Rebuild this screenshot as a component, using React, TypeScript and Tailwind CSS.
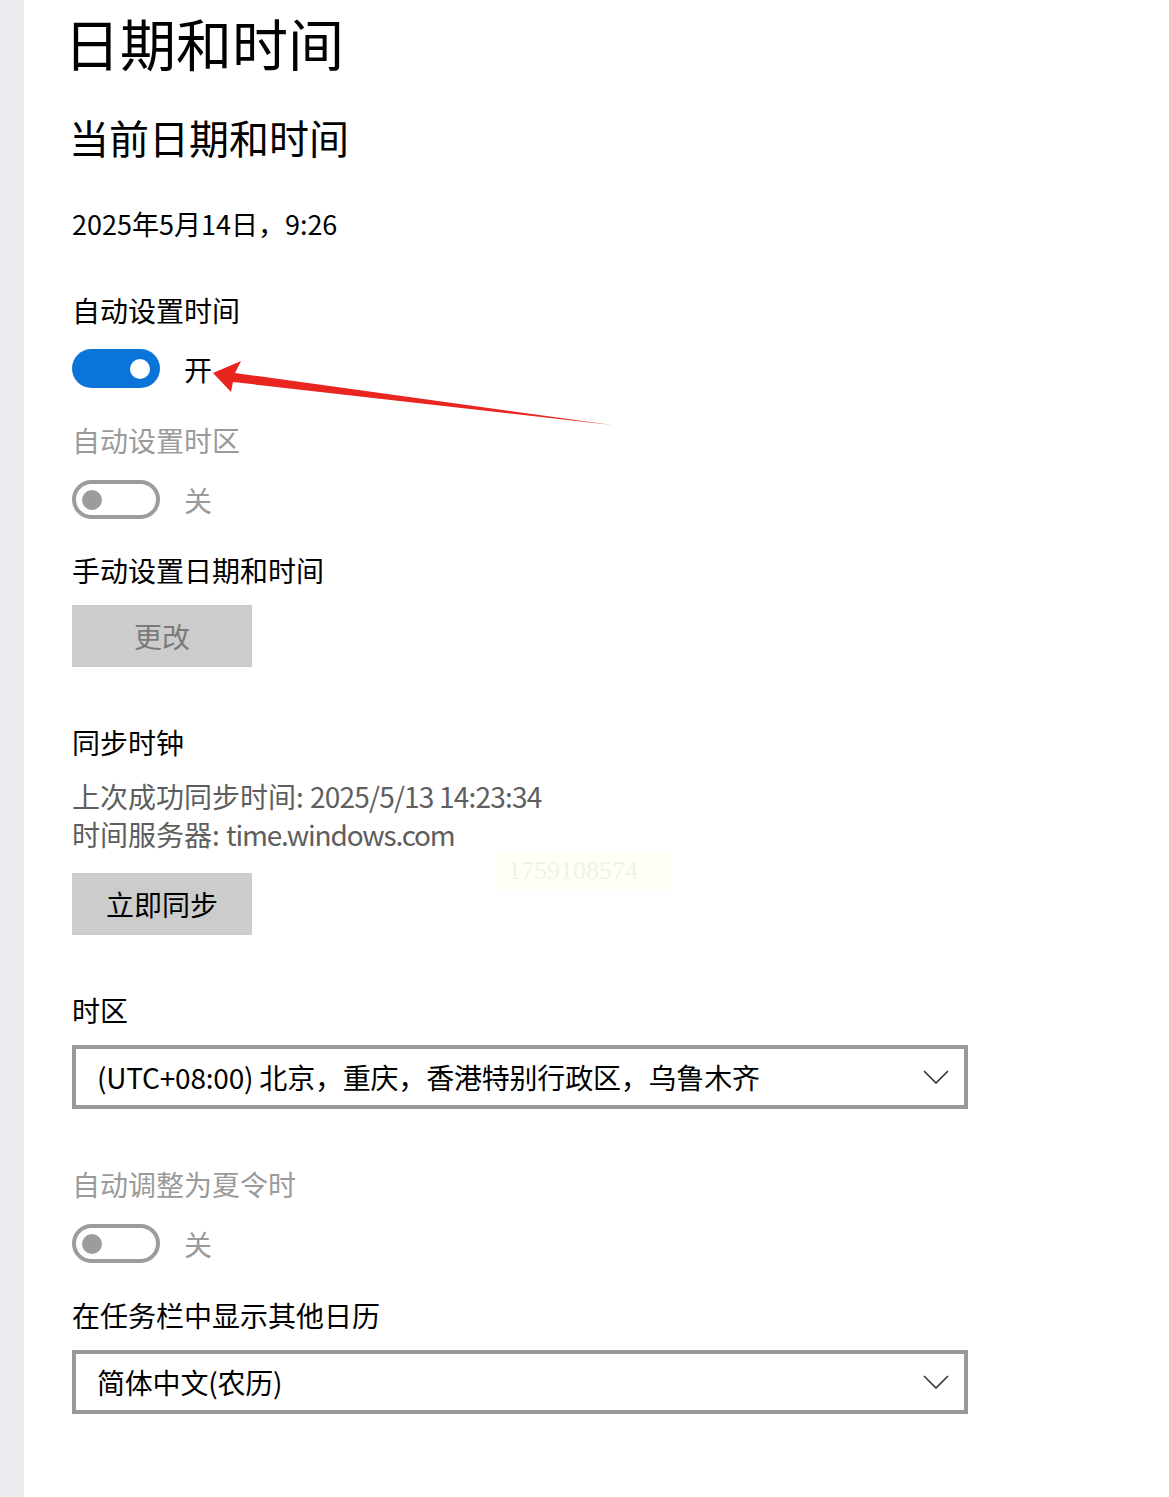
import React from "react";

const FONT = { fontFamily: '"Noto Sans CJK SC", "Noto Sans", sans-serif' };

const Toggle = ({ on, label }: { on: boolean; label: string }) => (
  <div className="flex items-center h-[39px]">
    {on ? (
      <div className="w-[88px] h-[39px] rounded-full bg-[#0a74d9] flex items-center justify-end pr-[10px]">
        <div className="w-[20px] h-[20px] rounded-full bg-white" />
      </div>
    ) : (
      <div className="w-[88px] h-[39px] rounded-full border-4 border-[#9c9c9c] flex items-center pl-[6px]">
        <div className="w-[20px] h-[20px] rounded-full bg-[#9c9c9c]" />
      </div>
    )}
    <span className={`ml-[24px] text-[28px] leading-[28px] ${on ? "text-black" : "text-[#9a9a9a]"}`}>{label}</span>
  </div>
);

const Select = ({ value }: { value: string }) => (
  <div className="w-[896px] h-[64px] border-4 border-[#999999] bg-white flex items-center justify-between pl-[21px] pr-[15px]">
    <span className="text-[28px] leading-[28px] text-black tracking-[-0.2px]">{value}</span>
    <svg width="26" height="14" viewBox="0 0 26 14" fill="none">
      <path d="M1 1 L13 13 L25 1" stroke="#333" strokeWidth="1.6" />
    </svg>
  </div>
);

export default function App() {
  return (
    <div className="relative flex w-[1169px] min-h-[1497px] bg-white" style={FONT}>
      <div className="w-[24px] bg-[#eaecf0] shrink-0" />
      <div className="pl-[48px] pt-[14px] flex flex-col items-start">
        <h1 className="ml-[-8px] text-[56px] leading-[55px] text-black">日期和时间</h1>
        <h2 className="ml-[-3px] mt-[48px] text-[40px] leading-[40px] text-black">当前日期和时间</h2>
        <div className="mt-[53px] text-[27px] leading-[27px] text-black">2025年5月14日，9:26</div>

        <div className="mt-[59px] text-[28px] leading-[28px] text-black">自动设置时间</div>
        <div className="mt-[25px]"><Toggle on label="开" /></div>

        <div className="mt-[38px] text-[28px] leading-[28px] text-[#9a9a9a]">自动设置时区</div>
        <div className="mt-[26px]"><Toggle on={false} label="关" /></div>

        <div className="mt-[37px] text-[28px] leading-[28px] text-black">手动设置日期和时间</div>
        <button className="mt-[21px] w-[180px] h-[62px] bg-[#cccccc] text-[28px] leading-[28px] text-[#7a7a7a]">更改</button>

        <div className="mt-[61px] text-[28px] leading-[28px] text-black">同步时钟</div>
        <div className="mt-[21px] text-[28px] leading-[38px] text-[#5e5e5e]">
          <div>上次成功同步时间: <span className="tracking-[-0.8px]">2025/5/13 14:23:34</span></div>
          <div>时间服务器: <span className="tracking-[-1.2px]">time.windows.com</span></div>
        </div>
        <button className="mt-[20px] w-[180px] h-[62px] bg-[#cccccc] text-[28px] leading-[28px] text-black">立即同步</button>

        <div className="mt-[61px] text-[28px] leading-[28px] text-black">时区</div>
        <div className="mt-[21px]"><Select value="(UTC+08:00) 北京，重庆，香港特别行政区，乌鲁木齐" /></div>

        <div className="mt-[61px] text-[28px] leading-[28px] text-[#9a9a9a]">自动调整为夏令时</div>
        <div className="mt-[26px]"><Toggle on={false} label="关" /></div>

        <div className="mt-[38px] text-[28px] leading-[28px] text-black">在任务栏中显示其他日历</div>
        <div className="mt-[21px]"><Select value="简体中文(农历)" /></div>
      </div>

      {/* faint watermark */}
      <div
        className="absolute left-[496px] top-[852px] w-[176px] h-[38px] bg-[#fffff7] text-[#f1f1e6] text-[26px] leading-[38px] pl-[12px]"
        style={{ fontFamily: '"Liberation Serif", serif' }}
      >
        1759108574
      </div>

      {/* red annotation arrow */}
      <svg className="absolute left-0 top-0 pointer-events-none" width="1169" height="1497">
        <polygon points="213,373 241,361 235,373 612,425 233,382 231,392" fill="#e8261f" />
      </svg>
    </div>
  );
}
